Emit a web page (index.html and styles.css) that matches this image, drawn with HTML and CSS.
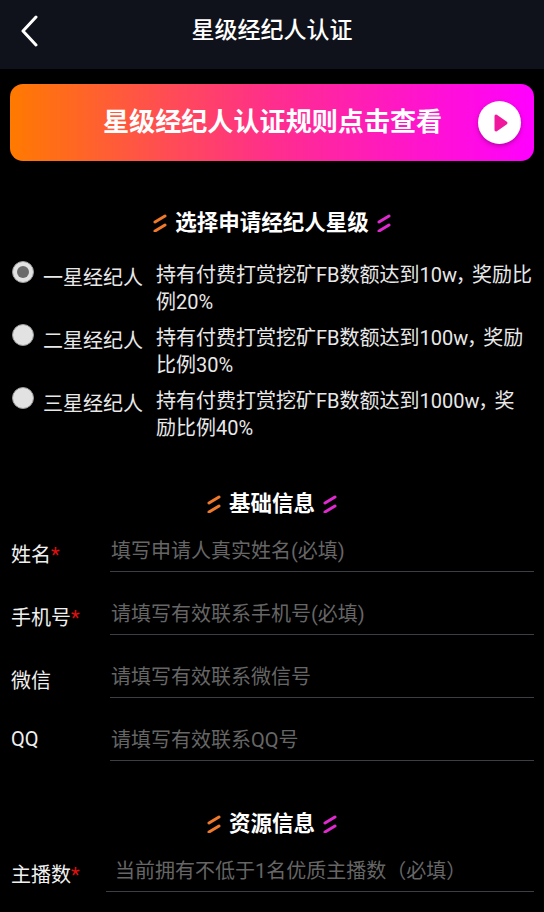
FILE: index.html
```html
<!DOCTYPE html>
<html lang="zh-CN">
<head>
<meta charset="utf-8">
<title>星级经纪人认证</title>
<link rel="stylesheet" href="styles.css">
</head>
<body>
<header class="topbar">
  <svg class="back" viewBox="0 0 20 32" width="20" height="32"><path d="M17 2 L4 16 L17 30" fill="none" stroke="#fff" stroke-width="3" stroke-linecap="round" stroke-linejoin="round"/></svg>
  <h1 class="topbar-title">星级经纪人认证</h1>
</header>
<main class="page">
  <a class="banner">
    <span class="banner-text">星级经纪人认证规则点击查看</span>
    <span class="play"><svg viewBox="0 0 16 20" width="16" height="20"><path d="M3 3 L13 10 L3 17 Z" fill="#f0189c" stroke="#f0189c" stroke-width="3" stroke-linejoin="round"/></svg></span>
  </a>

  <h2 class="section first">
    <svg class="slash" viewBox="0 0 14 18" width="14" height="18"><path d="M2 8 L12 2 M2 17 L12 11" stroke="#f07a2a" stroke-width="3" stroke-linecap="round"/></svg>
    选择申请经纪人星级
    <svg class="slash" viewBox="0 0 14 18" width="14" height="18"><path d="M2 8 L12 2 M2 17 L12 11" stroke="#e02ad0" stroke-width="3" stroke-linecap="round"/></svg>
  </h2>

  <div class="levels">
    <div class="level">
      <span class="radio checked"></span>
      <span class="level-name">一星经纪人</span>
      <p class="level-desc">持有付费打赏挖矿FB数额达到10w， 奖励比例20%</p>
    </div>
    <div class="level">
      <span class="radio"></span>
      <span class="level-name">二星经纪人</span>
      <p class="level-desc">持有付费打赏挖矿FB数额达到100w， 奖励比例30%</p>
    </div>
    <div class="level">
      <span class="radio"></span>
      <span class="level-name">三星经纪人</span>
      <p class="level-desc">持有付费打赏挖矿FB数额达到1000w， 奖励比例40%</p>
    </div>
  </div>

  <h2 class="section basic">
    <svg class="slash" viewBox="0 0 14 18" width="14" height="18"><path d="M2 8 L12 2 M2 17 L12 11" stroke="#f07a2a" stroke-width="3" stroke-linecap="round"/></svg>
    基础信息
    <svg class="slash" viewBox="0 0 14 18" width="14" height="18"><path d="M2 8 L12 2 M2 17 L12 11" stroke="#e02ad0" stroke-width="3" stroke-linecap="round"/></svg>
  </h2>

  <div class="fields">
    <div class="field"><span class="label low">姓名<i class="req">*</i></span><span class="value">填写申请人真实姓名(必填)</span></div>
    <div class="field"><span class="label low">手机号<i class="req">*</i></span><span class="value">请填写有效联系手机号(必填)</span></div>
    <div class="field"><span class="label low">微信</span><span class="value">请填写有效联系微信号</span></div>
    <div class="field"><span class="label">QQ</span><span class="value">请填写有效联系QQ号</span></div>
  </div>

  <h2 class="section resource">
    <svg class="slash" viewBox="0 0 14 18" width="14" height="18"><path d="M2 8 L12 2 M2 17 L12 11" stroke="#f07a2a" stroke-width="3" stroke-linecap="round"/></svg>
    资源信息
    <svg class="slash" viewBox="0 0 14 18" width="14" height="18"><path d="M2 8 L12 2 M2 17 L12 11" stroke="#e02ad0" stroke-width="3" stroke-linecap="round"/></svg>
  </h2>

  <div class="fields">
    <div class="field wide"><span class="label low">主播数<i class="req">*</i></span><span class="value">当前拥有不低于1名优质主播数（必填）</span></div>
  </div>
</main>
</body>
</html>
```
FILE: styles.css
```css
* { box-sizing: border-box; }
html, body { margin: 0; padding: 0; }
body {
  width: 544px;
  height: 912px;
  overflow: hidden;
  background: #000;
  color: #f0f0f0;
  font-family: Roboto, "Noto Sans CJK SC", "Noto Sans", sans-serif;
}
.topbar {
  height: 69px;
  background: #0f121a;
  display: flex;
  align-items: center;
  justify-content: center;
  padding-bottom: 7px;
  position: relative;
}
.back { position: absolute; left: 19px; top: 15px; }
.topbar-title {
  margin: 0;
  font-size: 23px;
  line-height: 30px;
  font-weight: 500;
  color: #fff;
}
.page { padding: 15px 10px 0; }
.banner {
  height: 77px;
  border-radius: 13px;
  background: linear-gradient(90deg, #ff7a00 0%, #ff2e8c 50%, #ff00ff 100%);
  display: flex;
  align-items: center;
  padding-left: 93px;
  padding-right: 13px;
  justify-content: space-between;
}
.banner-text {
  font-size: 26.1px;
  line-height: 34px;
  font-weight: 700;
  color: #fff;
  position: relative;
  top: -1px;
}
.play {
  width: 43px;
  height: 43px;
  border-radius: 50%;
  background: #fff;
  box-shadow: 0 2px 4px rgba(120, 0, 100, .5);
  display: flex;
  align-items: center;
  justify-content: center;
  padding-left: 3px;
}
.section {
  margin: 0;
  display: flex;
  align-items: center;
  justify-content: center;
  gap: 8px;
  font-size: 21.5px;
  line-height: 30px;
  font-weight: 700;
  color: #fff;
}
.section.first { margin-top: 47px; }
.section.basic { margin-top: 47px; }
.section.resource { margin-top: 48px; }
.slash { flex: none; }
.levels { margin-top: 23px; display: flex; flex-direction: column; gap: 8px; }
.level { display: flex; align-items: flex-start; }
.radio {
  flex: none;
  width: 22px;
  height: 22px;
  margin: 0 0 0 2px;
  border-radius: 50%;
  background: #e2e2e2;
  border: 1px solid #999;
  position: relative;
}
.radio.checked::after {
  content: "";
  position: absolute;
  left: 4px;
  top: 4px;
  width: 12px;
  height: 12px;
  border-radius: 50%;
  background: #6a6a6a;
}
.level-name {
  flex: none;
  width: 113px;
  margin-left: 9px;
  padding-top: 4px;
  font-size: 20px;
  line-height: 27px;
  color: #e8e8e8;
}
.level-desc {
  margin: 0;
  flex: 1;
  padding-top: 1px;
  font-size: 20px;
  line-height: 27px;
  color: #e8e8e8;
  font-feature-settings: "palt";
}
.fields { display: flex; flex-direction: column; gap: 18px; margin-top: 8px; }
.field { display: flex; height: 45px; align-items: stretch; }
.label {
  flex: none;
  width: 100px;
  padding: 10px 0 0 1px;
  font-size: 20px;
  line-height: 27px;
  color: #f0f0f0;
}
.label.low { padding-top: 15px; }
.req { font-style: normal; color: #e01010; }
.value {
  flex: 1;
  padding: 11px 0 0 1px;
  font-size: 20px;
  line-height: 27px;
  color: #666;
  border-bottom: 1.5px solid #3c3e46;
}
.wide .label { width: 96px; }
.wide .value { padding-left: 9px; }
```
